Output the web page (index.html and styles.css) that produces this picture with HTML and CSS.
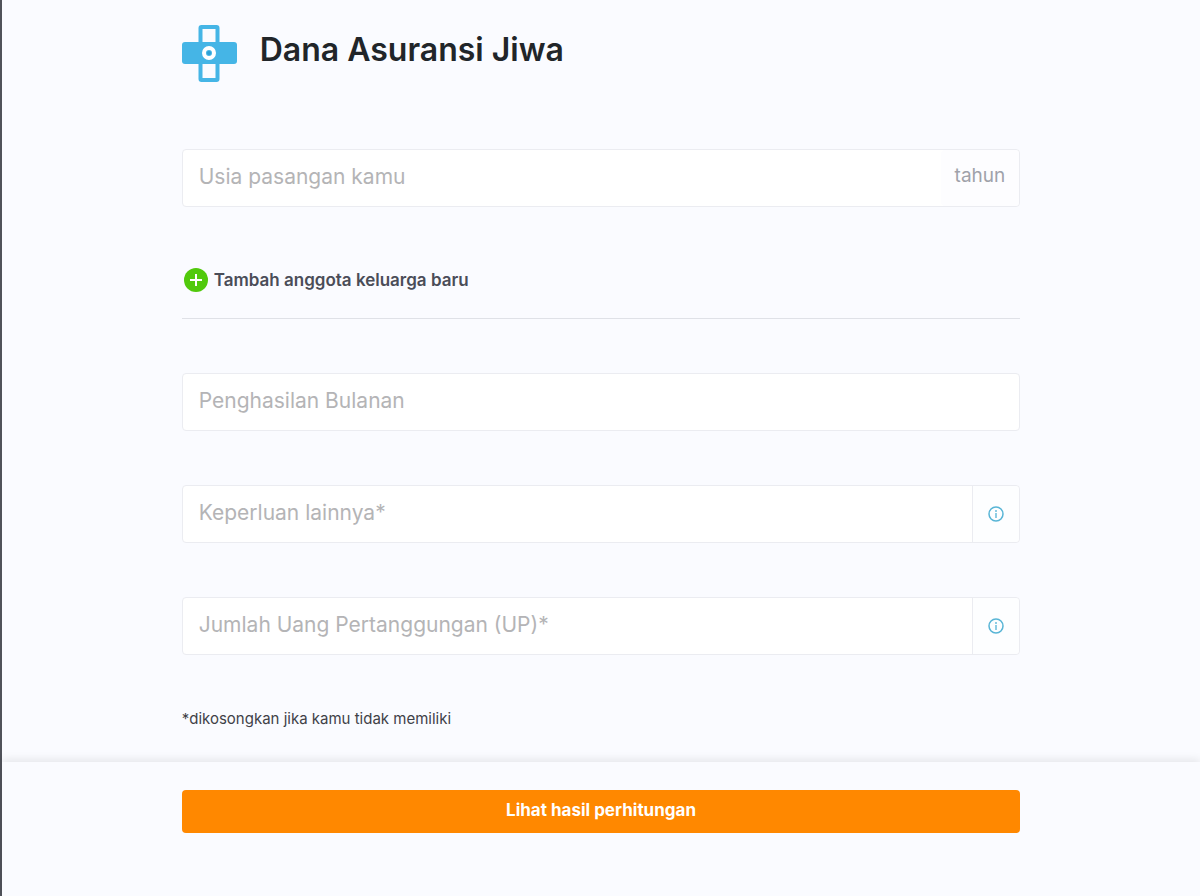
FILE: index.html
```html
<!DOCTYPE html>
<html lang="id">
<head>
  <meta charset="UTF-8" />
  <meta name="viewport" content="width=device-width, initial-scale=1.0">
  <title>Dana Asuransi Jiwa</title>
  <link rel="stylesheet" href="styles.css">
</head>
<body>

  <form class="page">
    <main class="container">
      <header class="header">
        <svg class="logo" viewBox="0 0 56 58" aria-hidden="true">
          <rect x="18.5" y="3" width="17" height="53" rx="1" fill="#fafbff" stroke="#45b5e6" stroke-width="4" />
          <rect x="0" y="18" width="55" height="22" rx="3" fill="#45b5e6" />
          <circle cx="27" cy="29" r="5" fill="#45b5e6" stroke="#fff" stroke-width="4" />
          <circle cx="27" cy="29" r="2" fill="#2f9fd4" />
        </svg>
        <h1>Dana Asuransi Jiwa</h1>
      </header>

      <div class="field">
        <input type="text" id="usia" placeholder="Usia pasangan kamu" aria-label="Usia pasangan kamu">
        <label class="unit" for="usia">tahun</label>
      </div>

      <div class="add-row">
        <button type="button" class="add">
          <svg class="add-icon" viewBox="0 0 24 24" aria-hidden="true">
            <circle cx="12" cy="12" r="12" fill="#51c90c" />
            <path d="M12 6v12M6 12h12" stroke="#fff" stroke-width="2" />
          </svg>
          Tambah anggota keluarga baru
        </button>
      </div>

      <div class="field">
        <input type="text" placeholder="Penghasilan Bulanan" aria-label="Penghasilan Bulanan">
      </div>

      <div class="field">
        <input type="text" placeholder="Keperluan lainnya*" aria-label="Keperluan lainnya">
        <button type="button" class="info" aria-label="Info keperluan lainnya">
          <svg viewBox="0 0 16 16" aria-hidden="true">
            <circle cx="8" cy="8" r="7" fill="none" stroke="#58b5d6" stroke-width="1.5" />
            <path d="M8 4v2M8 7v5" stroke="#8fcde4" stroke-width="2" />
          </svg>
        </button>
      </div>

      <div class="field">
        <input type="text" placeholder="Jumlah Uang Pertanggungan (UP)*" aria-label="Jumlah Uang Pertanggungan (UP)">
        <button type="button" class="info" aria-label="Info uang pertanggungan">
          <svg viewBox="0 0 16 16" aria-hidden="true">
            <circle cx="8" cy="8" r="7" fill="none" stroke="#58b5d6" stroke-width="1.5" />
            <path d="M8 4v2M8 7v5" stroke="#8fcde4" stroke-width="2" />
          </svg>
        </button>
      </div>

      <p class="note">*dikosongkan jika kamu tidak memiliki</p>
    </main>

    <footer class="footer">
      <div class="container">
        <button type="submit" class="submit">Lihat hasil perhitungan</button>
      </div>
    </footer>
  </form>

</body>
</html>
```
FILE: styles.css
```css
* {
  margin: 0;
  padding: 0;
  box-sizing: border-box;
}

body {
  background-color: #fafbff;
  color: #212529;
  font-family: Inter, "Noto Sans", sans-serif;
}

input,
button {
  font-family: inherit;
}

.page {
  min-height: 100vh;
  border-left: 2px solid #50525a;
  display: flex;
  flex-direction: column;
}

.container {
  width: 70%;
  margin: 0 auto;
}

.header {
  display: flex;
  align-items: center;
  gap: 22px;
  padding-top: 24px;
  margin-bottom: 67px;
}

.logo {
  width: 56px;
  height: 58px;
}

h1 {
  font-size: 32px;
  line-height: 48px;
  font-weight: 600;
  padding-bottom: 6px;
}

.field {
  display: flex;
  height: 58px;
  background-color: #fff;
  border: 1px solid #ebecf1;
  border-radius: 4px;
  margin-bottom: 54px;
}

.field input {
  flex: 1;
  min-width: 0;
  border: none;
  background: none;
  outline: none;
  font-size: 21px;
  padding: 0 16px 4px;
  color: #495057;
}

.field input::placeholder {
  color: #b4b4b6;
}

.unit {
  display: flex;
  align-items: center;
  padding: 0 14px 6px;
  background-color: #fdfdff;
  border-radius: 4px;
  font-size: 19px;
  color: #a0a2aa;
}

.info {
  width: 47px;
  display: flex;
  align-items: center;
  justify-content: center;
  border: none;
  border-left: 1px solid #ebecf1;
  border-radius: 0 4px 4px 0;
  background-color: #fdfeff;
}

.info svg {
  width: 16px;
  height: 16px;
}

.add-row {
  display: flex;
  padding: 7px 2px 26px;
  border-bottom: 1px solid #dfe1e7;
  margin-bottom: 54px;
}

.add {
  display: flex;
  align-items: center;
  gap: 6px;
  border: none;
  background: none;
  font-size: 17px;
  line-height: 24px;
  font-weight: 600;
  color: #4a4d58;
}

.add-icon {
  width: 24px;
  height: 24px;
}

.note {
  font-size: 15px;
  line-height: 20px;
  color: #3f4147;
  margin-bottom: 33px;
}

.footer {
  flex: 1;
  padding: 28px 0;
  box-shadow: 0 -3px 8px rgba(0, 0, 0, 0.08);
}

.submit {
  display: block;
  width: 100%;
  height: 43px;
  padding-bottom: 4px;
  border: none;
  border-radius: 4px;
  background-color: #ff8800;
  color: #fff;
  font-size: 17px;
  font-weight: 700;
}
```
